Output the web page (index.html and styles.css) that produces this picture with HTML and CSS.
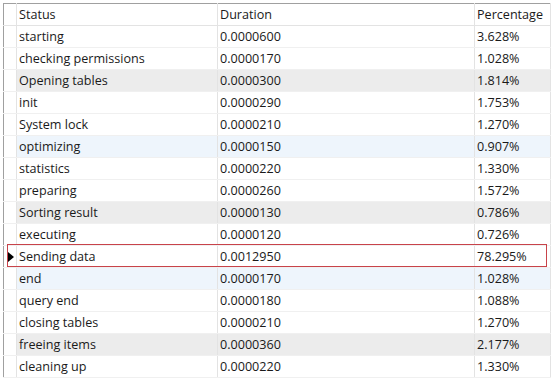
FILE: index.html
```html
<!DOCTYPE html>
<html lang="en">
<head>
    <meta charset="UTF-8">
    <title>Profile</title>
    <link rel="stylesheet" href="styles.css">
</head>
<body>
    <div class="grid-wrap">
        <table class="result-grid">
            <colgroup>
                <col class="col-ind">
                <col class="col-status">
                <col class="col-duration">
                <col class="col-pct">
            </colgroup>
            <thead>
                <tr>
                    <th class="ind"></th>
                    <th>Status</th>
                    <th>Duration</th>
                    <th>Percentage</th>
                </tr>
            </thead>
            <tbody>
                <tr><td class="ind"></td><td>starting</td><td>0.0000600</td><td>3.628%</td></tr>
                <tr><td class="ind"></td><td>checking permissions</td><td>0.0000170</td><td>1.028%</td></tr>
                <tr class="gray"><td class="ind"></td><td>Opening tables</td><td>0.0000300</td><td>1.814%</td></tr>
                <tr><td class="ind"></td><td>init</td><td>0.0000290</td><td>1.753%</td></tr>
                <tr><td class="ind"></td><td>System lock</td><td>0.0000210</td><td>1.270%</td></tr>
                <tr class="blue"><td class="ind"></td><td>optimizing</td><td>0.0000150</td><td>0.907%</td></tr>
                <tr><td class="ind"></td><td>statistics</td><td>0.0000220</td><td>1.330%</td></tr>
                <tr><td class="ind"></td><td>preparing</td><td>0.0000260</td><td>1.572%</td></tr>
                <tr class="gray"><td class="ind"></td><td>Sorting result</td><td>0.0000130</td><td>0.786%</td></tr>
                <tr><td class="ind"></td><td>executing</td><td>0.0000120</td><td>0.726%</td></tr>
                <tr class="current"><td class="ind"><span class="arrow"></span></td><td>Sending data</td><td>0.0012950</td><td>78.295%</td></tr>
                <tr class="blue"><td class="ind"></td><td>end</td><td>0.0000170</td><td>1.028%</td></tr>
                <tr><td class="ind"></td><td>query end</td><td>0.0000180</td><td>1.088%</td></tr>
                <tr><td class="ind"></td><td>closing tables</td><td>0.0000210</td><td>1.270%</td></tr>
                <tr class="gray"><td class="ind"></td><td>freeing items</td><td>0.0000360</td><td>2.177%</td></tr>
                <tr><td class="ind"></td><td>cleaning up</td><td>0.0000220</td><td>1.330%</td></tr>
            </tbody>
        </table>
        <div class="current-box"></div>
    </div>
</body>
</html>
```
FILE: styles.css
```css
* {
    margin: 0;
    padding: 0;
    box-sizing: border-box;
}

body {
    background: #fff;
    font-family: 'Open Sans', 'Noto Sans CJK SC', sans-serif;
    font-size: 12.6px;
    color: #1a1a1a;
    overflow: hidden;
}

.grid-wrap {
    position: relative;
    padding: 3px 0 0 3px;
}

.result-grid {
    border-collapse: collapse;
    table-layout: fixed;
    width: 547px;
    border-top: 1px solid #a0a0a0;
    border-left: 1px solid #a0a0a0;
}

.col-ind { width: 13px; }
.col-status { width: 201px; }
.col-duration { width: 257px; }
.col-pct { width: 76px; }

th, td {
    height: 22px;
    padding: 0 0 1px 2px;
    text-align: left;
    font-weight: normal;
    white-space: nowrap;
    overflow: hidden;
    border-right: 1px solid #e3e3e3;
    border-bottom: 1px solid #f0f0f0;
}

th {
    border-bottom: 1px solid #e3e3e3;
}

.ind {
    padding: 0;
    position: relative;
}

tr.gray td { background: #ececec; }
tr.blue td { background: #eef5fc; }
tr.gray td.ind, tr.blue td.ind { background: #fff; }

.arrow {
    position: absolute;
    left: 4px;
    top: 6px;
    border-left: 6px solid #000;
    border-top: 5px solid transparent;
    border-bottom: 5px solid transparent;
}

.current-box {
    position: absolute;
    left: 7px;
    top: 244px;
    width: 540px;
    height: 23px;
    border: 1px solid #c8434a;
    pointer-events: none;
}
```
